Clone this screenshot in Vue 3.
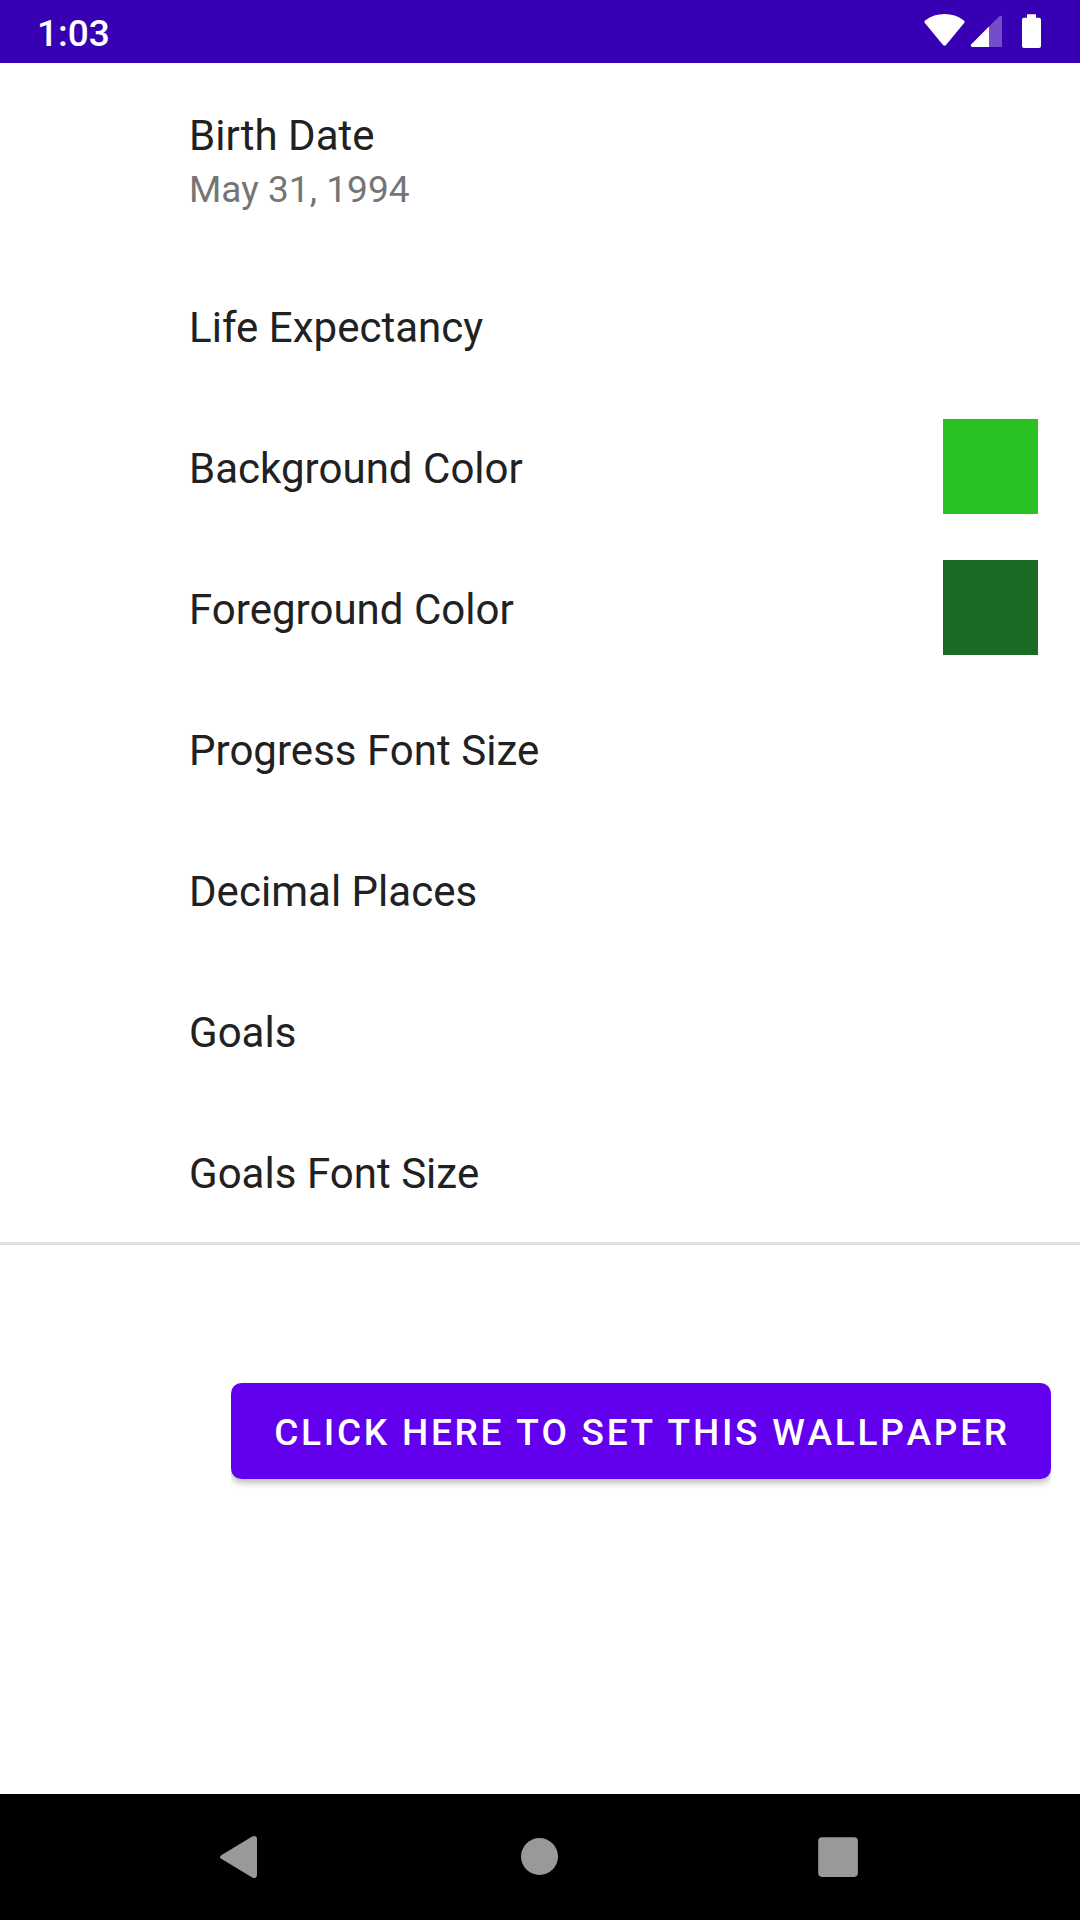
<script setup>
const preferences = [
  { title: 'Birth Date', summary: 'May 31, 1994' },
  { title: 'Life Expectancy' },
  { title: 'Background Color', color: '#2ac122' },
  { title: 'Foreground Color', color: '#1c6a25' },
  { title: 'Progress Font Size' },
  { title: 'Decimal Places' },
  { title: 'Goals' },
  { title: 'Goals Font Size' },
]
</script>

<template>
  <div class="screen">
    <header class="status-bar">
      <span class="clock">1:03</span>
      <svg class="status-icons" width="130" height="63" viewBox="0 0 130 63">
        <!-- wifi -->
        <path
          fill="#fff"
          d="M5.3 23.6Q3.4 21.6 5.4 20.2Q13.6 14 24.5 14Q35.4 14 43.6 20.2Q45.6 21.6 43.7 23.6L26.2 44.8Q24.5 46.6 22.8 44.8Z"
        />
        <!-- mobile signal -->
        <path
          fill="#fff"
          fill-opacity="0.3"
          d="M69 26.5L79.4 16.2Q82 14.6 82 17.6V47H69Z"
        />
        <path fill="#fff" d="M69 26.5V47H52.4Q50 46.6 51.3 44.3Z" />
        <!-- battery -->
        <path
          fill="#fff"
          d="M107 14.2H116V17.7H119Q121 17.7 121 19.7V46Q121 48 119 48H104Q102 48 102 46V19.7Q102 17.7 104 17.7H107Z"
        />
      </svg>
    </header>

    <main class="content">
      <ul class="preferences">
        <li v-for="item in preferences" :key="item.title" class="preference">
          <div class="labels" :class="{ detailed: item.summary }">
            <span class="title">{{ item.title }}</span>
            <span v-if="item.summary" class="summary">{{ item.summary }}</span>
          </div>
          <span
            v-if="item.color"
            class="swatch"
            :style="{ backgroundColor: item.color }"
          ></span>
        </li>
      </ul>
      <button class="set-wallpaper" type="button">CLICK HERE TO SET THIS WALLPAPER</button>
    </main>

    <nav class="nav-bar">
      <svg width="60" height="60" viewBox="0 0 60 60">
        <path
          fill="#999"
          d="M11.2 28.2L42.2 9.6Q44 8.5 45.5 9.3Q47 10 47 12V48Q47 50 45.5 50.7Q44 51.5 42.2 50.4L11.2 31.8Q8.8 30 11.2 28.2Z"
        />
      </svg>
      <svg width="60" height="60" viewBox="0 0 60 60">
        <circle cx="29.5" cy="29.5" r="18.5" fill="#999" />
      </svg>
      <svg width="60" height="60" viewBox="0 0 60 60">
        <rect x="8.2" y="10.2" width="39.7" height="39.7" rx="3.8" fill="#999" />
      </svg>
    </nav>
  </div>
</template>

<style>
body {
  margin: 0;
}
</style>

<style scoped>
.screen {
  display: flex;
  flex-direction: column;
  width: 1080px;
  height: 1920px;
  overflow: hidden;
  background: #fff;
  font-family: Roboto, sans-serif;
}

.status-bar {
  display: flex;
  flex: none;
  justify-content: space-between;
  height: 63px;
  padding: 0 30px 0 37px;
  background: #3700b3;
  color: #fff;
}

.clock {
  padding-top: 12px;
  font-size: 37px;
  font-weight: 500;
  line-height: 43px;
}

.content {
  display: flex;
  flex: 1;
  flex-direction: column;
}

.preferences {
  margin: 0;
  padding: 0;
  border-bottom: 3px solid #e0e0e0;
  list-style: none;
}

.preference {
  display: flex;
  align-items: center;
  justify-content: space-between;
  min-height: 141px;
  padding: 0 42px 0 189px;
}

.labels {
  display: flex;
  flex-direction: column;
  gap: 8px;
  padding-top: 4px;
}

.labels.detailed {
  padding: 48px 0 44px;
}

.title {
  color: #212121;
  font-size: 42px;
  letter-spacing: 0.03px;
  line-height: 49px;
}

.summary {
  color: #757575;
  font-size: 37px;
  letter-spacing: 0.04px;
  line-height: 43px;
}

.swatch {
  width: 95px;
  height: 95px;
}

.set-wallpaper {
  align-self: flex-end;
  width: 820px;
  height: 96px;
  margin: 138px 29px 0 0;
  padding: 3px 0 0 2px;
  border: 0;
  border-radius: 10.5px;
  background: #6200ee;
  box-shadow: 0 4px 6px rgba(0, 0, 0, 0.26);
  clip-path: inset(-2px 0 -10px);
  color: #fff;
  font-family: inherit;
  font-kerning: none;
  font-size: 37px;
  font-weight: 500;
  letter-spacing: 2.74px;
  line-height: 43px;
  white-space: nowrap;
}

.nav-bar {
  display: grid;
  flex: none;
  grid-template-columns: repeat(3, 300px);
  align-items: center;
  justify-content: center;
  justify-items: center;
  height: 126px;
  background: #000;
}
</style>
